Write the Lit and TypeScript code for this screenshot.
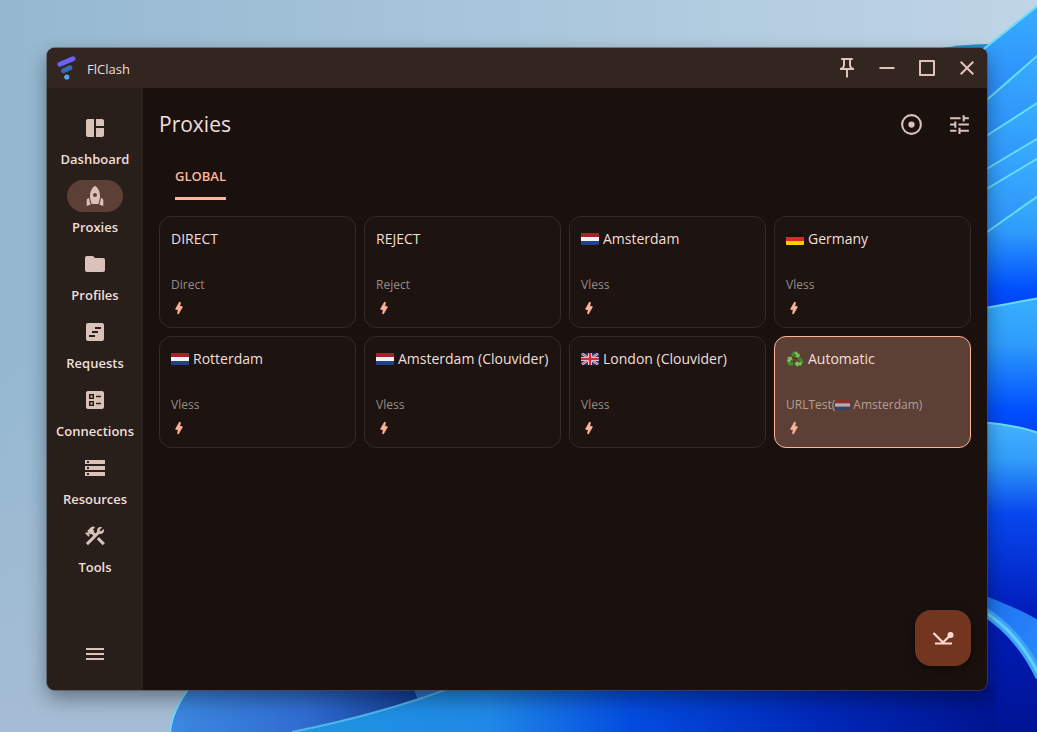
import { LitElement, html, svg, css, nothing } from "lit";
import { customElement, property, state } from "lit/decorators.js";

type Flag = "nl" | "de" | "gb" | "recycle";

interface Proxy {
  name: string;
  type: string;
  flag?: Flag;
  via?: { flag: Flag; name: string };
}

const PROXIES: Proxy[] = [
  { name: "DIRECT", type: "Direct" },
  { name: "REJECT", type: "Reject" },
  { name: "Amsterdam", type: "Vless", flag: "nl" },
  { name: "Germany", type: "Vless", flag: "de" },
  { name: "Rotterdam", type: "Vless", flag: "nl" },
  { name: "Amsterdam (Clouvider)", type: "Vless", flag: "nl" },
  { name: "London (Clouvider)", type: "Vless", flag: "gb" },
  { name: "Automatic", type: "URLTest", flag: "recycle", via: { flag: "nl", name: "Amsterdam" } },
];

const NAV = ["Dashboard", "Proxies", "Profiles", "Requests", "Connections", "Resources", "Tools"];

const ICONS: Record<string, unknown> = {
  Dashboard: svg`<path fill-rule="evenodd" d="M11 21H5c-1.100 0-2-.9-2-2V5c0-1.100.9-2 2-2h6v18zm2 0h6c1.100 0 2-.9 2-2v-7h-8v9zm8-11V5c0-1.100-.9-2-2-2h-6v7h8z"/>`,
  Proxies: svg`<path fill-rule="evenodd" d="M12 2s5 2.040 5 10.500c0 2.490-1.040 5.570-1.600 7.500H8.600C8.040 18.070 7 14.990 7 12.500 7 4.040 12 2 12 2zm2 9c0-1.100-.9-2-2-2s-2 .9-2 2 .9 2 2 2 2-.9 2-2zm-6.310 9.520c-.48-1.230-1.520-4.170-1.670-6.870l-1.130.75C4 15 3.700 15.400 3.700 16.070V22l3.990-1.480zM20.300 22v-5.930c0-.67-.3-1.070-1.190-1.660l-1.130-.75c-.15 2.690-1.200 5.640-1.670 6.870L20.300 22z"/>`,
  Profiles: svg`<path d="M10 4H4c-1.100 0-1.990.9-1.990 2L2 18c0 1.100.9 2 2 2h16c1.100 0 2-.9 2-2V8c0-1.100-.9-2-2-2h-8l-2-2z"/>`,
  Requests: svg`<path fill-rule="evenodd" d="M19 3H5c-1.100 0-2 .9-2 2v14c0 1.100.9 2 2 2h14c1.100 0 2-.9 2-2V5c0-1.100-.9-2-2-2zm-7 14H6v-2h6v2zm3-4H9v-2h6v2zm3-4h-6V7h6v2z"/>`,
  Connections: svg`<path fill-rule="evenodd" d="M19 3H5c-1.100 0-2 .9-2 2v14c0 1.100.9 2 2 2h14c1.100 0 2-.9 2-2V5c0-1.100-.9-2-2-2zM11 18H6v-5h5v5zm-1.500-3.500h-2v2h2v-2zM11 11H6V6h5v5zM9.500 7.500h-2v2h2v-2zM18 16.250h-5v-1.500h5v1.500zm0-7h-5v-1.500h5v1.500z"/>`,
  Resources: svg`<path fill-rule="evenodd" d="M2 20h20v-4H2v4zm2-3h2v2H4v-2zM2 4v4h20V4H2zm4 3H4V5h2v2zm-4 7h20v-4H2v4zm2-3h2v2H4v-2z"/>`,
  Tools: svg`<path d="M13.783 15.172l2.121-2.121 5.996 5.996-2.121 2.121zM17.500 10c1.930 0 3.500-1.570 3.500-3.500 0-.58-.16-1.120-.41-1.600l-2.700 2.700-1.490-1.490 2.700-2.700c-.48-.25-1.020-.41-1.600-.41C15.570 3 14 4.570 14 6.500c0 .41.080.8.210 1.160l-1.850 1.850-1.780-1.780.71-.71-1.410-1.410L12 3.490c-1.170-1.170-3.070-1.170-4.240 0L4.220 7.030l1.410 1.410H2.810l-.71.71 3.540 3.540.71-.71V9.150l1.410 1.410.71-.71 1.780 1.780-7.410 7.410 2.120 2.120L16.340 9.790c.36.130.75.210 1.160.21z"/>`,
  menu: svg`<path d="M3 18h18v-2H3v2zm0-5h18v-2H3v2zm0-7v2h18V6H3z"/>`,
  pin: svg`<path fill-rule="evenodd" d="M14 4v5c0 1.120.37 2.160 1 3H9c.65-.86 1-1.900 1-3V4h4m3-2H7c-.55 0-1 .45-1 1s.45 1 1 1h1v5c0 1.660-1.340 3-3 3v2h5.970v7l1 1 1-1v-7H19v-2c-1.660 0-3-1.340-3-3V4h1c.55 0 1-.45 1-1s-.45-1-1-1z"/>`,
  minimize: svg`<path d="M4.500 11h15v2h-15z"/>`,
  maximize: svg`<path fill-rule="evenodd" d="M5 4h14a1 1 0 0 1 1 1v14a1 1 0 0 1-1 1H5a1 1 0 0 1-1-1V5a1 1 0 0 1 1-1zm1 2v12h12V6z"/>`,
  close: svg`<path d="M19 6.410L17.590 5 12 10.590 6.410 5 5 6.410 10.590 12 5 17.590 6.410 19 12 13.410 17.590 19 19 17.590 13.410 12z"/>`,
  target: svg`<circle cx="12" cy="12" r="9" fill="none" stroke="currentColor" stroke-width="2"/><circle cx="12" cy="12" r="3"/>`,
  tune: svg`<path d="M3 17v2h6v-2H3zM3 5v2h10V5H3zm10 16v-2h8v-2h-8v-2h-2v6h2zM7 9v2H3v2h4v2h2V9H7zm14 4v-2H11v2h10zm-6-4h2V7h4V5h-4V3h-2v6z"/>`,
  bolt: svg`<path d="M10.670 21c-.35 0-.62-.31-.57-.66L11 14H7.500c-.88 0-.33-.75-.31-.78 1.260-2.230 3.150-5.530 5.650-9.930.1-.18.3-.29.5-.29.35 0 .62.310.57.660l-.9 6.340h3.510c.4 0 .62.190.4.660-3.290 5.740-5.200 9.090-5.750 10.050-.1.180-.29.290-.5.290z" stroke="currentColor" stroke-width="1.400"/>`,
  delay: svg`<path d="M4 16.500h17v2H4z"/><path d="M2.500 7l9.500 9.500 6-6" fill="none" stroke="currentColor" stroke-width="2.200"/><circle cx="19.500" cy="9" r="3"/>`,
};

const icon = (name: string, size = "") =>
  html`<svg class="icon ${size}" viewBox="0 0 24 24" fill="currentColor" aria-hidden="true">${ICONS[name]}</svg>`;

const UNION_JACK = svg`
  <rect width="18" height="12" rx="1" fill="#1f3a80"/>
  <path d="M1 .6l16 10.800M17 .6L1 11.400" stroke="#eee" stroke-width="2.200"/>
  <path d="M1 .6l16 10.800M17 .6L1 11.400" stroke="#d22f3c" stroke-width="1"/>
  <path d="M9 0v12M0 6h18" stroke="#eee" stroke-width="4"/>
  <path d="M9 0v12M0 6h18" stroke="#d8283a" stroke-width="2.400"/>`;

const RECYCLE = svg`
  <path d="M5 4.500L7.200.8h3.600L8 6z" fill="#3f8f2f"/>
  <path d="M8.200.8h2.700l1.600 2.500 1.400-.8-.7 4.600-4.400-1.700 1.400-.8z" fill="#79bf58"/>
  <path d="M.9 6.600l4.400-1.200 1.500 4.300-1.500-.7-1.800 3.300L.8 9.900l1.300-2.500z" fill="#79bf58"/>
  <path d="M.8 10.200L2.400 14.500H7v-3.400H3z" fill="#3f8f2f"/>
  <path d="M12.100 8.200l3-1.700 2.100 4-1.500 2.500z" fill="#3f8f2f"/>
  <path d="M16.600 10.500l-1.400 3.900h-3.500v1.600L8.300 12.800l3.400-3.300v1.700h3.500z" fill="#79bf58"/>`;

const flagArt = (flag: Flag) => {
  if (flag === "recycle")
    return html`<svg class="emoji" viewBox="0 0 18 16" aria-hidden="true">${RECYCLE}</svg>`;
  const art =
    flag === "gb"
      ? UNION_JACK
      : flag === "nl"
        ? svg`<rect width="18" height="12" rx="1" fill="#20438c"/><path d="M1 0h16a1 1 0 0 1 1 1v3H0V1a1 1 0 0 1 1-1z" fill="#ae2029"/><path d="M0 4h18v4H0z" fill="#f2f2f2"/>`
        : svg`<rect width="18" height="12" rx="1" fill="#ffd000"/><path d="M1 0h16a1 1 0 0 1 1 1v3H0V1a1 1 0 0 1 1-1z" fill="#151110"/><path d="M0 4h18v4H0z" fill="#ee1f26"/>`;
  return html`<svg class="emoji" viewBox="0 -2 18 16" aria-hidden="true">${art}</svg>`;
};

const shared = css`
  * { box-sizing: border-box; }
  button { font: inherit; color: inherit; background: none; border: 0; padding: 0; margin: 0; cursor: pointer; }
  .icon { width: 24px; height: 24px; display: block; flex: none; }
`;

@customElement("desktop-wallpaper")
export class DesktopWallpaper extends LitElement {
  static styles = css`
    :host { display: block; }
    svg { display: block; width: 100%; height: 100%; }
  `;

  render() {
    return html`<svg viewBox="0 0 1037 732" preserveAspectRatio="none" aria-hidden="true">
      <defs>
        <linearGradient id="sky" x1="0" y1="0" x2="1" y2="0">
          <stop offset="0" stop-color="#95b8d1"/><stop offset=".5" stop-color="#a9c6dc"/><stop offset="1" stop-color="#c0d5e6"/>
        </linearGradient>
        <linearGradient id="mist" x1="0" y1="0" x2="0" y2="1">
          <stop offset=".5" stop-color="#a5bdd4" stop-opacity="0"/><stop offset="1" stop-color="#a5bdd4"/>
        </linearGradient>
        <linearGradient id="petal" x1="0" y1="0" x2="0" y2="1">
          <stop offset="0" stop-color="#38b0ff"/><stop offset="1" stop-color="#2b86f8"/>
        </linearGradient>
        <linearGradient id="deep" x1="0" y1="0" x2="0" y2="1">
          <stop offset="0" stop-color="#38b0fc"/><stop offset=".3" stop-color="#2f9dfb"/><stop offset=".75" stop-color="#0050ff"/><stop offset="1" stop-color="#0038ee"/>
        </linearGradient>
        <linearGradient id="navy" x1="0" y1="0" x2="0" y2="1">
          <stop offset="0" stop-color="#44b4ff"/><stop offset=".12" stop-color="#309cf8"/><stop offset=".28" stop-color="#0848f0"/><stop offset=".6" stop-color="#001cb8"/><stop offset="1" stop-color="#001490"/>
        </linearGradient>
        <linearGradient id="leaf" x1="0" y1="0" x2="1" y2="0">
          <stop offset="0" stop-color="#3c88e0"/><stop offset=".5" stop-color="#2f6cd0"/><stop offset="1" stop-color="#0c3288"/>
        </linearGradient>
        <linearGradient id="floor" x1="0" y1="0" x2="1" y2="0">
          <stop offset="0" stop-color="#1e96e0"/><stop offset=".28" stop-color="#2088e6"/><stop offset=".48" stop-color="#044ce0"/><stop offset=".75" stop-color="#0028b8"/><stop offset="1" stop-color="#001490"/>
        </linearGradient>
        <linearGradient id="ribbon" x1="0" y1="0" x2="1" y2="1">
          <stop offset="0" stop-color="#1c6fee"/><stop offset="1" stop-color="#2b8cff"/>
        </linearGradient>
      </defs>
      <rect width="1037" height="732" fill="url(#sky)"/>
      <rect width="1037" height="732" fill="url(#mist)"/>
      <path d="M930 50q30-6 60-6l10 30h-70z" fill="#1f8fd0"/>
      <g stroke="#68dcfa" stroke-width="2">
        <path d="M980 52L1045 0v110h-65z" fill="url(#petal)"/>
        <path d="M980 106l65-57v110h-65z" fill="url(#petal)"/>
        <path d="M980 140l65-42v100h-65z" fill="url(#petal)"/>
        <path d="M980 173l65-39v100h-65z" fill="url(#petal)"/>
        <path d="M980 193l65-39v100h-65z" fill="url(#petal)"/>
        <path d="M980 237l65-46v130h-65z" fill="url(#deep)"/>
        <path d="M980 309l65-12v150h-65z" fill="url(#deep)"/>
        <path d="M980 422q34 2 65 13v310h-65z" fill="url(#navy)"/>
        <path d="M172 745q-8-24 20-61h250l-20 61z" fill="url(#leaf)"/>
      </g>
      <path d="M410 680h60l-52 20z" fill="#2e72cc"/>
      <path d="M292 732q90-18 164-46h540v46z" fill="url(#floor)"/>
      <path d="M292 732q90-18 164-46" fill="none" stroke="#52b4e8" stroke-width="2"/>
      <path d="M980 594q34 12 60 27v52q-22-42-60-67z" fill="url(#ribbon)"/>
      <path d="M980 609q38 22 60 68" fill="none" stroke="#3fa4f8" stroke-width="9"/>
      <path d="M980 609q38 22 60 68" fill="none" stroke="#62cefa" stroke-width="3"/>
    </svg>`;
  }
}

@customElement("proxy-card")
export class ProxyCard extends LitElement {
  @property({ attribute: false }) proxy!: Proxy;
  @property({ type: Boolean, reflect: true }) selected = false;

  static styles = [
    shared,
    css`
      :host {
        display: flex; flex-direction: column; box-sizing: border-box; position: relative;
        min-width: 0; height: 112px; padding: 12px 11px 11px;
        border: 1px solid #342a27; border-radius: 12px; background: #1d1310;
      }
      :host([selected]) { background: #5c4035; border-color: #ffb599; }
      .name { display: flex; align-items: center; gap: 4px; font-size: 14px; line-height: 20px; color: #f1dfd9; text-align: left; white-space: nowrap; }
      .type { display: flex; align-items: center; margin-top: auto; font-size: 12px; line-height: 16px; color: #988c88; white-space: nowrap; }
      :host([selected]) .type { color: #b59f97; }
      .type .emoji { width: 15px; height: 14px; margin-right: 3px; opacity: .6; }
      .emoji { width: 18px; height: 16px; flex: none; }
      .test { align-self: flex-start; margin-top: 7px; color: #ffb599; }
      .icon.small { width: 16px; height: 16px; }
    `,
  ];

  render() {
    const { name, type, flag, via } = this.proxy;
    return html`
      <button class="name" aria-pressed=${this.selected ? "true" : "false"}>${flag ? flagArt(flag) : nothing}<span>${name}</span></button>
      <div class="type">${via ? html`<span>${type}(</span>${flagArt(via.flag)}<span>${via.name})</span>` : type}</div>
      <button class="test" aria-label="Test delay of ${name}" @click=${(e: Event) => e.stopPropagation()}>${icon("bolt", "small")}</button>
    `;
  }
}

@customElement("app-root")
export class AppRoot extends LitElement {
  @state() private page = "Proxies";
  @state() private selected = "Automatic";

  static styles = [
    shared,
    css`
      :host {
        display: flex; box-sizing: border-box; position: relative; min-height: 100vh;
        padding: 48px 50px 42px 47px; overflow: hidden;
        font-family: "Segoe UI", "Open Sans", "Noto Sans", sans-serif; color: #f1dfd9;
      }
      desktop-wallpaper { position: absolute; inset: 0; }
      .window {
        position: relative; flex: 1; display: flex; flex-direction: column; min-width: 0;
        border-radius: 8px; overflow: hidden; background: #1a110e;
        box-shadow: 0 0 0 1px rgba(80, 76, 80, .6), 0 8px 20px rgba(0, 0, 0, .4);
      }
      .titlebar { display: flex; align-items: center; height: 40px; padding-left: 8px; background: #332520; color: #dfc4bc; }
      .logo { width: 24px; height: 24px; margin-right: 8px; }
      .app-name { flex: 1; font-size: 13px; line-height: 20px; padding-top: 2px; color: #f1dfd9; }
      .caption { display: grid; place-items: center; width: 40px; height: 40px; }
      .body { flex: 1; display: flex; min-height: 0; }
      .rail { display: flex; flex-direction: column; align-items: center; gap: 12px; width: 96px; flex: none; padding: 24px 0 16px; background: #281e1a; }
      .dest { display: flex; flex-direction: column; align-items: center; gap: 6px; font-size: 13px; font-weight: 600; line-height: 18px; }
      .pill { display: grid; place-items: center; width: 56px; height: 32px; border-radius: 16px; color: #dac2ba; }
      .dest[aria-current="page"] .pill { background: #5c4035; }
      .round { display: grid; place-items: center; width: 40px; height: 40px; border-radius: 20px; color: #dac2ba; }
      .rail .round { margin-top: auto; }
      .main { position: relative; flex: 1; min-width: 0; display: flex; flex-direction: column; }
      .appbar { display: flex; align-items: center; gap: 8px; height: 64px; padding: 8px 8px 0 16px; }
      .appbar .icon { width: 25px; height: 25px; }
      h1 { flex: 1; margin: 0; font-size: 21px; font-weight: 400; line-height: 28px; }
      .tabs { display: flex; padding: 0 32px; }
      .tab { height: 48px; padding-top: 2px; border-bottom: 3px solid #ffb599; border-radius: 2px 2px 0 0; font-size: 13px; font-weight: 600; color: #ffb599; }
      .grid { display: grid; grid-template-columns: repeat(4, minmax(0, 1fr)); gap: 8px; padding: 16px; }
      .fab {
        position: absolute; right: 16px; bottom: 24px; display: grid; place-items: center; width: 56px; height: 56px;
        border-radius: 16px; background: #723520; color: #ffdbce; box-shadow: 0 3px 8px rgba(0, 0, 0, .5);
      }
    `,
  ];

  render() {
    return html`
      <desktop-wallpaper></desktop-wallpaper>
      <div class="window">
        <header class="titlebar">
          <svg class="logo" viewBox="0 0 24 24" aria-hidden="true" stroke-linecap="round">
            <path d="M5 8.200L18 2.800" stroke="#6a63f6" stroke-width="5"/>
            <path d="M8.500 14.800l6.500-3" stroke="#3568b8" stroke-width="4.800"/>
            <circle cx="11.800" cy="21" r="2.600" fill="#5aa5ea"/>
          </svg>
          <span class="app-name">FlClash</span>
          <button class="caption" aria-label="Pin">${icon("pin")}</button>
          <button class="caption" aria-label="Minimize">${icon("minimize")}</button>
          <button class="caption" aria-label="Maximize">${icon("maximize")}</button>
          <button class="caption" aria-label="Close">${icon("close")}</button>
        </header>
        <div class="body">
          <nav class="rail">
            ${NAV.map(
              (label) => html`<button class="dest" aria-current=${this.page === label ? "page" : "false"} @click=${() => (this.page = label)}>
                <span class="pill">${icon(label)}</span><span>${label}</span>
              </button>`,
            )}
            <button class="round" aria-label="Menu">${icon("menu")}</button>
          </nav>
          <main class="main">
            <div class="appbar">
              <h1>${this.page}</h1>
              <button class="round" aria-label="Locate selected">${icon("target")}</button>
              <button class="round" aria-label="Settings">${icon("tune")}</button>
            </div>
            <div class="tabs" role="tablist"><button class="tab" role="tab" aria-selected="true">GLOBAL</button></div>
            <div class="grid">
              ${PROXIES.map(
                (p) => html`<proxy-card .proxy=${p} ?selected=${p.name === this.selected} @click=${() => (this.selected = p.name)}></proxy-card>`,
              )}
            </div>
            <button class="fab" aria-label="Test all delays">${icon("delay")}</button>
          </main>
        </div>
      </div>
    `;
  }
}
